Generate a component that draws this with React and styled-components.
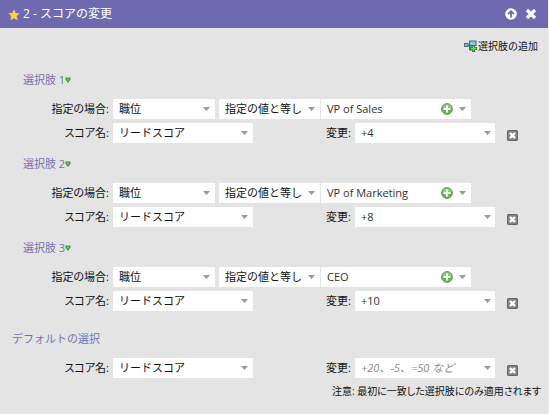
import React from "react";
import styled, { createGlobalStyle } from "styled-components";

const GlobalStyle = createGlobalStyle`
  * { box-sizing: border-box; }
  body {
    margin: 0;
    background: #e4e4e4;
    color: #111;
    font-family: "Open Sans", "Noto Sans CJK JP", sans-serif;
    font-size: 11px;
    line-height: 20px;
  }
  button, input, select { font: inherit; color: inherit; }
`;

const Panel = styled.form`
  border-right: 1px solid #efefef;
  padding-bottom: 13px;
`;

const Header = styled.header`
  display: flex;
  align-items: center;
  height: 28px;
  padding: 0 7px 0 8px;
  background: #6f6ab0;
  color: #fff;
`;

const Title = styled.h1`
  flex: 1;
  margin: 0 0 0 3px;
  font-size: 12px;
  font-weight: 400;
`;

const IconButton = styled.button.attrs({ type: "button" })`
  display: flex;
  align-items: center;
  justify-content: center;
  flex: none;
  width: ${(p) => p.$width || 20}px;
  height: 16px;
  padding: 0;
  border: 0;
  background: none;
  cursor: pointer;
`;

const Toolbar = styled.div`
  display: flex;
  justify-content: flex-end;
  padding: 8px 10px 0 0;
`;

const AddButton = styled.button.attrs({ type: "button" })`
  display: flex;
  align-items: center;
  gap: 1px;
  height: 20px;
  padding: 0;
  border: 0;
  background: none;
  font-size: 10px;
  cursor: pointer;
`;

const Choices = styled.div`
  display: flex;
  flex-direction: column;
  gap: 11px;
  padding: 14px 0 18px;
`;

const Section = styled.section`
  display: flex;
  flex-direction: column;
  gap: 4px;
`;

const SectionTitle = styled.h2`
  display: flex;
  align-items: center;
  margin: 0 0 5px;
  padding-left: ${(p) => (p.$outer ? 12 : 23)}px;
  color: #7670b3;
  font-size: 11px;
  font-weight: 400;
`;

const Row = styled.div`
  display: flex;
  gap: 4px;
  height: 20px;
`;

const Label = styled.label`
  flex: none;
  width: ${(p) => (p.$inner ? 94 : 109)}px;
  text-align: right;
  white-space: nowrap;
  font-feature-settings: "palt";
`;

const Joined = styled.div`
  display: flex;
  gap: 1px;
`;

const Field = styled.div`
  display: grid;
  grid-template-columns: minmax(0, 1fr) auto;
  align-items: center;
  width: ${(p) => p.$width}px;
  height: 20px;
  background: #fff;
`;

const Select = styled.select`
  grid-area: 1 / 1 / 2 / 3;
  width: 100%;
  height: 20px;
  padding: 0 17px 0 6px;
  border: 0;
  border-radius: 0;
  background: none;
  appearance: none;
`;

const Chevron = styled.span`
  grid-area: 1 / 2;
  display: flex;
  padding-right: 5px;
  pointer-events: none;
`;

const TextInput = styled.input`
  width: 100%;
  min-width: 0;
  height: 20px;
  padding: 0 0 0 6px;
  border: 0;
  background: none;
  color: #333;
  &::placeholder { color: #888; opacity: 1; font-style: italic; }
`;

const FieldButtons = styled.div`
  display: flex;
  align-items: center;
`;

const Remove = styled(IconButton)`
  align-self: flex-end;
  margin-left: 3px;
`;

const Note = styled.p`
  margin: 3px 7px 0 0;
  text-align: right;
  font-size: 10px;
  font-feature-settings: "palt";
`;

const Arrow = () => (
  <svg width="7" height="4" viewBox="0 0 7 4" aria-hidden="true">
    <path d="M0 0h7L3.5 4z" fill="#999" />
  </svg>
);

const Star = () => (
  <svg width="12" height="14" viewBox="0 -2 12 14" aria-hidden="true">
    <path d="M6 .2l1.7 3.7 4.1.4-3.1 2.8.9 4.2L6 9.2l-3.6 2.1.9-4.2L.2 4.3l4.1-.4z" fill="#ffd23c" />
  </svg>
);

const UpCircle = () => (
  <svg width="12" height="12" viewBox="0 0 12 12" aria-hidden="true">
    <circle cx="6" cy="6" r="5.8" fill="#fff" />
    <path d="M6 9.5V3.5M3 6.2l3-3 3 3" stroke="#6f6ab0" strokeWidth="1.8" fill="none" />
  </svg>
);

const Cross = () => (
  <svg width="12" height="12" viewBox="0 0 12 12" aria-hidden="true">
    <path d="M2 2l8 8M10 2l-8 8" stroke="#fff" strokeWidth="3.2" />
  </svg>
);

const AddChoiceIcon = () => (
  <svg width="13" height="12" viewBox="0 0 13 12" aria-hidden="true">
    <path d="M3 5.5h3" stroke="#35566b" />
    <rect x=".5" y="3.5" width="3.5" height="3" fill="#7fb6d6" stroke="#49718b" />
    <rect x="5.5" y="1" width="6.5" height="4.5" fill="#8fc6e2" stroke="#41677d" />
    <rect x="5.5" y="6" width="5" height="4" fill="#8fc6e2" stroke="#41677d" />
    <path d="M9.5 5v7M6 8.5h7" stroke="#267c25" strokeWidth="3" />
    <path d="M9.5 5.8v5.4M6.8 8.5h5.4" stroke="#6ddb5a" strokeWidth="1.4" />
  </svg>
);

const GreenMarker = () => (
  <svg width="6" height="6" viewBox="0 0 6 6" aria-hidden="true">
    <path d="M.5.5h5v2L3.5 5.6h-1L.5 2.5z" fill="#43982f" />
    <path d="M2 1.5h2v2H2z" fill="#76c65b" />
  </svg>
);

const PlusCircle = () => (
  <svg width="12" height="12" viewBox="0 0 12 12" aria-hidden="true">
    <circle cx="6" cy="6" r="5.4" fill="#5fbf45" stroke="#6c8f66" />
    <path d="M1.5 5a4.6 4.6 0 0 1 9 0z" fill="#8acb75" />
    <path d="M6 2.5v7M2.5 6h7" stroke="#fff" strokeWidth="2" />
  </svg>
);

const RemoveIcon = () => (
  <svg width="11" height="11" viewBox="0 0 11 11" aria-hidden="true">
    <rect x=".6" y=".6" width="9.8" height="9.8" rx="1" fill="#8a8a8a" stroke="#666" strokeWidth="1.2" />
    <path d="M3 3l5 5M8 3l-5 5" stroke="#fff" strokeWidth="2.4" />
  </svg>
);

function Dropdown({ width, options, ...rest }) {
  return (
    <Field $width={width}>
      <Select {...rest}>
        {options.map((o) => <option key={o}>{o}</option>)}
      </Select>
      <Chevron><Arrow /></Chevron>
    </Field>
  );
}

function Combo({ width, addable, ...rest }) {
  return (
    <Field $width={width}>
      <TextInput {...rest} />
      <FieldButtons>
        {addable && <IconButton $width={12} aria-label="値を追加"><PlusCircle /></IconButton>}
        <IconButton $width={addable ? 18 : 15} aria-label="候補を表示"><Arrow /></IconButton>
      </FieldButtons>
    </Field>
  );
}

function ScoreRow({ id, value }) {
  return (
    <Row>
      <Label htmlFor={`score-${id}`}>スコア名:</Label>
      <Dropdown id={`score-${id}`} width={140} options={["リードスコア"]} />
      <Label $inner htmlFor={`change-${id}`}>変更:</Label>
      <Combo id={`change-${id}`} width={140} defaultValue={value} placeholder="+20、-5、=50 など" />
      <Remove aria-label="削除"><RemoveIcon /></Remove>
    </Row>
  );
}

const choices = [
  { title: "VP of Sales", change: "+4" },
  { title: "VP of Marketing", change: "+8" },
  { title: "CEO", change: "+10" },
];

export default function App() {
  return (
    <>
      <GlobalStyle />
      <Panel>
        <Header>
          <Star />
          <Title>2 - スコアの変更</Title>
          <IconButton aria-label="上へ移動"><UpCircle /></IconButton>
          <IconButton aria-label="閉じる"><Cross /></IconButton>
        </Header>
        <Toolbar>
          <AddButton><AddChoiceIcon />選択肢の追加</AddButton>
        </Toolbar>
        <Choices>
          {choices.map((c, i) => (
            <Section key={c.title}>
              <SectionTitle>選択肢 {i + 1}<GreenMarker /></SectionTitle>
              <Row>
                <Label htmlFor={`field-${i}`}>指定の場合:</Label>
                <Dropdown id={`field-${i}`} width={102} options={["職位"]} />
                <Joined>
                  <Dropdown aria-label="条件" width={101} options={["指定の値と等しい"]} />
                  <Combo aria-label="値" width={150} addable defaultValue={c.title} />
                </Joined>
              </Row>
              <ScoreRow id={i} value={c.change} />
            </Section>
          ))}
        </Choices>
        <Section>
          <SectionTitle $outer>デフォルトの選択</SectionTitle>
          <ScoreRow id="default" />
        </Section>
        <Note>注意: 最初に一致した選択肢にのみ適用されます</Note>
      </Panel>
    </>
  );
}
